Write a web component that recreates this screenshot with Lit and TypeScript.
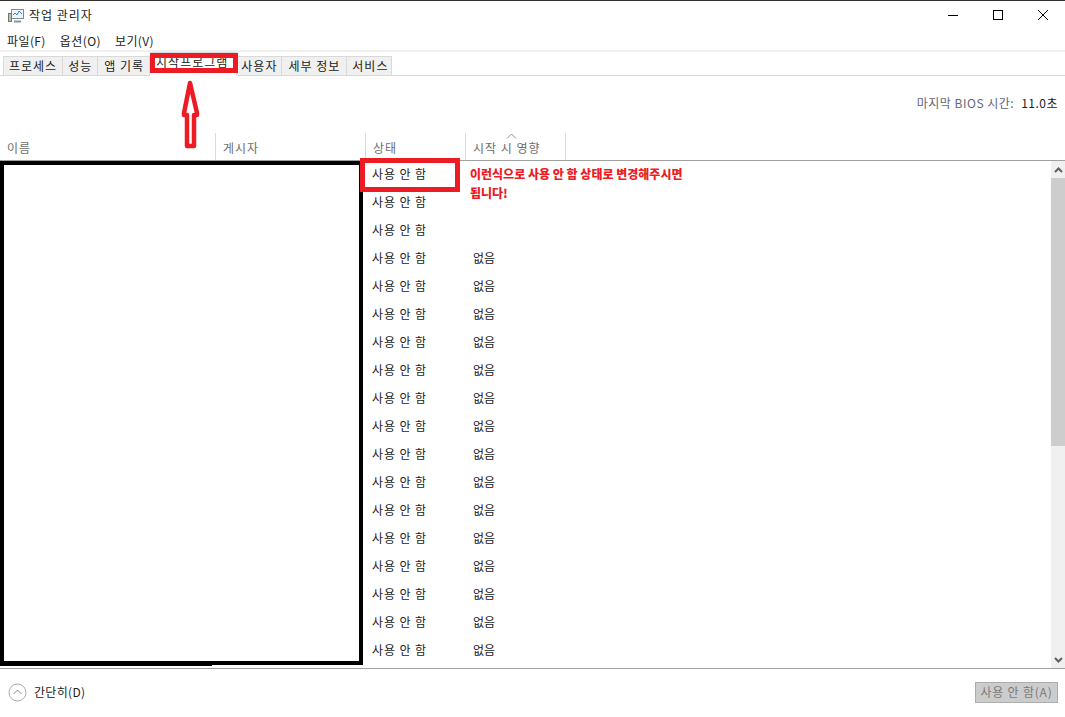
import { LitElement, html, css } from 'lit';
import { customElement } from 'lit/decorators.js';

const ROW_COUNT = 18;
const tabs = ['프로세스', '성능', '앱 기록', '시작프로그램', '사용자', '세부 정보', '서비스'];
const menus = ['파일(F)', '옵션(O)', '보기(V)'];

@customElement('app-root')
export class AppRoot extends LitElement {
  static styles = css`
    :host {
      display: flex;
      flex-direction: column;
      position: relative;
      width: 1065px;
      height: 717px;
      overflow: hidden;
      background: #fff;
      color: #000;
      font-family: 'Noto Sans CJK KR', 'Liberation Sans', sans-serif;
      font-size: 12px;
    }

    .top-strip {
      height: 1px;
      flex: none;
      background: #33312e;
    }

    .titlebar {
      height: 29px;
      flex: none;
      display: flex;
      align-items: center;
      padding-left: 8px;
      color: #222;
    }

    .titlebar .name {
      margin-left: 5px;
      padding-bottom: 3px;
      letter-spacing: 1px;
    }

    .controls {
      margin-left: auto;
      display: flex;
    }

    .controls button {
      width: 45px;
      height: 29px;
      padding: 0 0 2px 1px;
      border: 0;
      background: none;
      display: flex;
      align-items: center;
      justify-content: center;
    }

    .menubar {
      height: 20px;
      flex: none;
      display: flex;
      align-items: center;
      gap: 14px;
      padding-left: 7px;
      color: #222;
      letter-spacing: 0.4px;
    }

    .tabbar {
      height: 26px;
      flex: none;
      box-sizing: border-box;
      border-top: 2px solid #f0f0f0;
      border-bottom: 1px solid #d9d9d9;
      display: flex;
      align-items: flex-end;
      padding-left: 3px;
      background: #fff;
    }

    .tab {
      box-sizing: border-box;
      height: 20px;
      margin-bottom: -1px;
      padding: 0 5px 2px;
      display: flex;
      align-items: center;
      background: #f0f0f0;
      border: 1px solid #d9d9d9;
      border-left-width: 0;
      letter-spacing: 1px;
      color: #222;
    }

    .tab:first-child {
      border-left-width: 1px;
    }

    .tab:nth-child(3) {
      padding: 0 5px 2px 6px;
    }

    .tab:nth-child(5) {
      padding: 0 4px 2px;
    }

    .tab:nth-child(6) {
      padding: 0 6px 2px;
    }

    .tab:nth-child(7) {
      padding: 0 3px 2px 5px;
    }

    .tab.active {
      height: 24px;
      padding: 0 8px 6px 6px;
      background: #fff;
      border-bottom-color: #fff;
    }

    .bios {
      height: 57px;
      flex: none;
      box-sizing: border-box;
      display: flex;
      justify-content: flex-end;
      align-items: center;
      padding: 0 7px 4px 0;
      gap: 7px;
      color: #667;
      letter-spacing: 0.5px;
    }

    .bios b {
      font-weight: 400;
      color: #222;
    }

    .header {
      height: 28px;
      flex: none;
      box-sizing: border-box;
      display: flex;
      border-bottom: 1px solid #a0a0a0;
      color: #6d6d6d;
    }

    .header > div {
      box-sizing: border-box;
      padding: 2px 0 0 7px;
      border-right: 1px solid #d9d9d9;
      display: flex;
      align-items: center;
      position: relative;
      letter-spacing: 1px;
    }

    .name-col { width: 216px; }
    .publisher-col { width: 150px; }
    .status-col { width: 100px; }
    .impact-col { width: 100px; }

    .header > div.filler {
      flex: 1;
      border-right: 0;
    }

    .sort {
      position: absolute;
      left: 40px;
      top: 0;
    }

    .body {
      height: 508px;
      flex: none;
      box-sizing: border-box;
      display: flex;
      overflow: hidden;
      border-bottom: 1px solid #a0a0a0;
    }

    .rows {
      flex: 1;
      min-width: 0;
      padding-left: 366px;
    }

    .row {
      height: 28px;
      box-sizing: border-box;
      padding-bottom: 4px;
      display: flex;
      align-items: center;
      color: #222;
    }

    .row .status {
      width: 100px;
      box-sizing: border-box;
      padding-left: 6px;
      letter-spacing: 0.9px;
    }

    .row .impact {
      padding-left: 7px;
    }

    .scrollbar {
      width: 14px;
      flex: none;
      background: #f0f0f0;
      display: flex;
      flex-direction: column;
      align-items: center;
    }

    .scrollbar .arrow {
      height: 17px;
      flex: none;
      display: flex;
      align-items: center;
      justify-content: center;
    }

    .scrollbar .thumb {
      width: 100%;
      height: 268px;
      flex: none;
      background: #cdcdcd;
    }

    .scrollbar .arrow.down {
      margin-top: auto;
    }

    .footer {
      flex: 1;
      display: flex;
      align-items: center;
      padding: 0 7px 2px 8px;
      color: #222;
    }

    .footer .less {
      margin-left: 7px;
      padding-bottom: 2px;
      letter-spacing: 0.3px;
    }

    .footer button {
      margin-left: auto;
      width: 83px;
      height: 21px;
      padding: 0 0 2px;
      border: 1px solid #adadad;
      background: #cccccc;
      color: #7a7a7a;
      font: inherit;
      letter-spacing: 0.8px;
    }

    /* screenshot annotations */
    .mask {
      position: absolute;
      left: 0;
      top: 161px;
      width: 363px;
      height: 504px;
      box-sizing: border-box;
      border: 4px solid #000;
      background: #fff;
    }

    .mask::after {
      content: '';
      position: absolute;
      left: -4px;
      bottom: -5px;
      width: 212px;
      height: 1px;
      background: #000;
    }

    .mark {
      position: absolute;
      box-sizing: border-box;
      border: 5px solid #ed1c24;
    }

    .mark.tab-mark {
      left: 150px;
      top: 53px;
      width: 88px;
      height: 20px;
    }

    .mark.row-mark {
      left: 360px;
      top: 158px;
      width: 100px;
      height: 34px;
    }

    .up-arrow {
      position: absolute;
      left: 181px;
      top: 79px;
    }

    .note {
      position: absolute;
      left: 470px;
      top: 164px;
      width: 220px;
      color: #ed1c24;
      font-weight: 900;
      line-height: 19px;
      word-break: keep-all;
    }
  `;

  protected render() {
    const rows = Array.from({ length: ROW_COUNT }, (_, i) => i);
    return html`
      <div class="top-strip"></div>
      <div class="titlebar">
        <svg width="16" height="16" viewBox="0 0 16 16">
          <rect x="3.5" y="1.5" width="12" height="9" fill="#eef4fa" stroke="#7d8a96"></rect>
          <path d="M5 7l2-2 2 2 2-4 3 3" fill="none" stroke="#3f7fbf"></path>
          <rect x="0.5" y="5.5" width="3" height="8" fill="#b8c0b8" stroke="#6f7a70"></rect>
          <path d="M6 13.5h7" stroke="#8a949c" stroke-width="2"></path>
        </svg>
        <span class="name">작업 관리자</span>
        <div class="controls">
          <button aria-label="minimize">
            <svg width="12" height="12" viewBox="0 0 12 12"><path d="M1 6.5h10" stroke="#000"></path></svg>
          </button>
          <button aria-label="maximize">
            <svg width="12" height="12" viewBox="0 0 12 12"><rect x="1.5" y="1.5" width="9" height="9" fill="none" stroke="#000"></rect></svg>
          </button>
          <button aria-label="close">
            <svg width="12" height="12" viewBox="0 0 12 12"><path d="M1 1l10 10M11 1L1 11" stroke="#000"></path></svg>
          </button>
        </div>
      </div>
      <div class="menubar">${menus.map((m) => html`<span>${m}</span>`)}</div>
      <div class="tabbar">
        ${tabs.map((t, i) => html`<div class="tab ${i === 3 ? 'active' : ''}">${t}</div>`)}
      </div>
      <div class="bios"><span>마지막 BIOS 시간:</span><b>11.0초</b></div>
      <div class="header">
        <div class="name-col">이름</div>
        <div class="publisher-col">게시자</div>
        <div class="status-col">상태</div>
        <div class="impact-col">
          시작 시 영향
          <svg class="sort" width="11" height="6" viewBox="0 0 11 6"><path d="M1 5.5l4.5-4.5 4.5 4.5" fill="none" stroke="#8a8f96"></path></svg>
        </div>
        <div class="filler"></div>
      </div>
      <div class="body">
        <div class="rows">
          ${rows.map(
            (i) => html`<div class="row">
              <span class="status">사용 안 함</span>
              ${i > 2 ? html`<span class="impact">없음</span>` : ''}
            </div>`
          )}
        </div>
        <div class="scrollbar">
          <div class="arrow">
            <svg width="9" height="6" viewBox="0 0 9 6"><path d="M1 5l3.5-3.5L8 5" fill="none" stroke="#606060" stroke-width="2"></path></svg>
          </div>
          <div class="thumb"></div>
          <div class="arrow down">
            <svg width="9" height="6" viewBox="0 0 9 6"><path d="M1 1l3.5 3.5L8 1" fill="none" stroke="#606060" stroke-width="2"></path></svg>
          </div>
        </div>
      </div>
      <div class="footer">
        <svg width="19" height="19" viewBox="0 0 19 19">
          <circle cx="9.5" cy="9.5" r="8.5" fill="none" stroke="#a8a8a8"></circle>
          <path d="M5.5 11l4-4 4 4" fill="none" stroke="#8a8a8a"></path>
        </svg>
        <span class="less">간단히(D)</span>
        <button disabled>사용 안 함(A)</button>
      </div>

      <div class="mask"></div>
      <div class="mark tab-mark"></div>
      <div class="mark row-mark"></div>
      <svg class="up-arrow" width="20" height="71" viewBox="0 0 20 71">
        <path d="M9 4L3 34V36H6V67H13V36H16V34Z" fill="#fff" stroke="#ed1c24" stroke-width="4.5" stroke-linejoin="round"></path>
      </svg>
      <div class="note">이런식으로 사용 안 함 상태로 변경해주시면 됩니다!</div>
    `;
  }
}

declare global {
  interface HTMLElementTagNameMap {
    'app-root': AppRoot;
  }
}
